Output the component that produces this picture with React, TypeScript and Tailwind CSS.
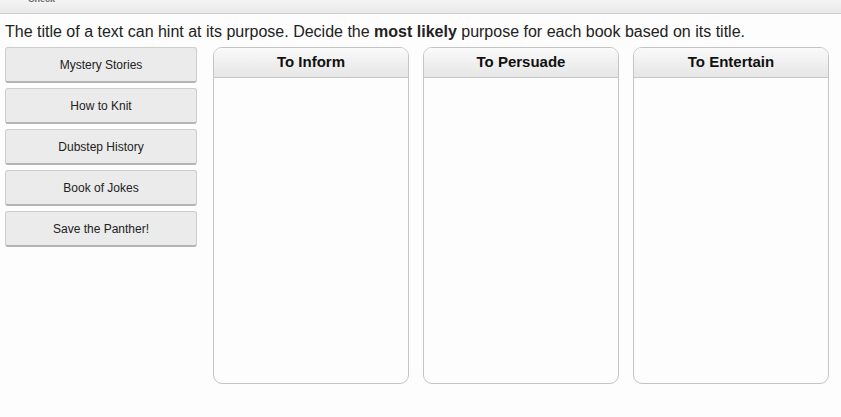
import React from 'react';

const books = ['Mystery Stories', 'How to Knit', 'Dubstep History', 'Book of Jokes', 'Save the Panther!'];
const purposes = ['To Inform', 'To Persuade', 'To Entertain'];

export default function App() {
  return (
    <div className="w-[841px] h-[417px] bg-[#fdfdfd] overflow-hidden font-['Liberation_Sans',Arial,sans-serif] text-[#222]">
      {/* Toolbar, cut off at the top */}
      <div className="h-[14px] bg-gradient-to-b from-[#f4f4f4] to-[#e9e9e9] border-b border-[#cfcfcf] overflow-hidden relative">
        <span className="absolute left-[28px] top-[-7px] text-[9px] font-bold text-[#666]">Check</span>
      </div>

      <p className="mt-[8px] ml-[5px] text-[16px] leading-[20px]">
        The title of a text can hint at its purpose. Decide the <b>most likely</b> purpose for each book based on its title.
      </p>

      <div className="flex mt-[5px] ml-[5px]">
        {/* Draggable tiles */}
        <div className="flex flex-col gap-[5px] w-[192px]">
          {books.map((b) => (
            <div
              key={b}
              className="h-[36px] flex items-center justify-center bg-[#ebebeb] border border-[#cdcdcd] border-b-[2px] border-b-[#b4b4b4] rounded-[3px] text-[12px]"
            >
              {b}
            </div>
          ))}
        </div>

        {/* Drop zones */}
        <div className="flex gap-[14px] ml-[16px]">
          {purposes.map((p) => (
            <div
              key={p}
              className="w-[196px] h-[337px] border border-[#c4c4c4] rounded-[9px] bg-[#fdfdfd] overflow-hidden flex flex-col"
            >
              <div className="h-[30px] flex items-center justify-center bg-gradient-to-b from-[#fafafa] to-[#e6e6e6] border-b border-[#c6c6c6] text-[15px] font-bold text-[#111]">
                {p}
              </div>
            </div>
          ))}
        </div>
      </div>
    </div>
  );
}
